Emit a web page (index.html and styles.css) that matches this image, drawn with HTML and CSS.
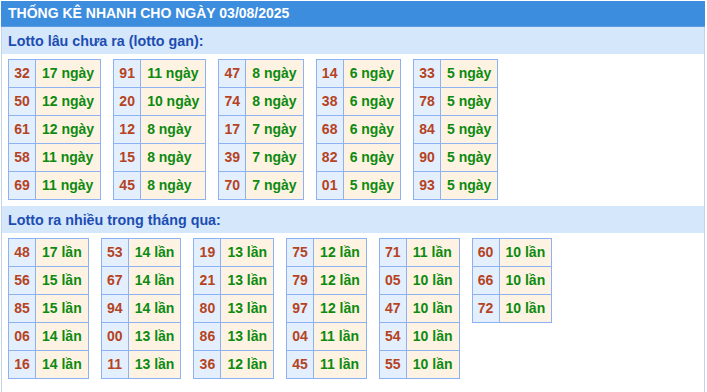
FILE: index.html
```html
<!DOCTYPE html>
<html lang="vi">
<head>
<meta charset="utf-8">
<title>Thống kê nhanh</title>
<link rel="stylesheet" href="styles.css">
</head>
<body>
<div class="box">
  <div class="title">THỐNG KÊ NHANH CHO NGÀY 03/08/2025</div>
  <div class="sub">Lotto lâu chưa ra (lotto gan):</div>
  <div class="group">
    <table class="t"><tr><td class="n">32</td><td class="v">17 ngày</td></tr><tr><td class="n">50</td><td class="v">12 ngày</td></tr><tr><td class="n">61</td><td class="v">12 ngày</td></tr><tr><td class="n">58</td><td class="v">11 ngày</td></tr><tr><td class="n">69</td><td class="v">11 ngày</td></tr></table>
    <table class="t"><tr><td class="n">91</td><td class="v">11 ngày</td></tr><tr><td class="n">20</td><td class="v">10 ngày</td></tr><tr><td class="n">12</td><td class="v">8 ngày</td></tr><tr><td class="n">15</td><td class="v">8 ngày</td></tr><tr><td class="n">45</td><td class="v">8 ngày</td></tr></table>
    <table class="t"><tr><td class="n">47</td><td class="v">8 ngày</td></tr><tr><td class="n">74</td><td class="v">8 ngày</td></tr><tr><td class="n">17</td><td class="v">7 ngày</td></tr><tr><td class="n">39</td><td class="v">7 ngày</td></tr><tr><td class="n">70</td><td class="v">7 ngày</td></tr></table>
    <table class="t"><tr><td class="n">14</td><td class="v">6 ngày</td></tr><tr><td class="n">38</td><td class="v">6 ngày</td></tr><tr><td class="n">68</td><td class="v">6 ngày</td></tr><tr><td class="n">82</td><td class="v">6 ngày</td></tr><tr><td class="n">01</td><td class="v">5 ngày</td></tr></table>
    <table class="t"><tr><td class="n">33</td><td class="v">5 ngày</td></tr><tr><td class="n">78</td><td class="v">5 ngày</td></tr><tr><td class="n">84</td><td class="v">5 ngày</td></tr><tr><td class="n">90</td><td class="v">5 ngày</td></tr><tr><td class="n">93</td><td class="v">5 ngày</td></tr></table>
  </div>
  <div class="sub">Lotto ra nhiều trong tháng qua:</div>
  <div class="group">
    <table class="t"><tr><td class="n">48</td><td class="v">17 lần</td></tr><tr><td class="n">56</td><td class="v">15 lần</td></tr><tr><td class="n">85</td><td class="v">15 lần</td></tr><tr><td class="n">06</td><td class="v">14 lần</td></tr><tr><td class="n">16</td><td class="v">14 lần</td></tr></table>
    <table class="t"><tr><td class="n">53</td><td class="v">14 lần</td></tr><tr><td class="n">67</td><td class="v">14 lần</td></tr><tr><td class="n">94</td><td class="v">14 lần</td></tr><tr><td class="n">00</td><td class="v">13 lần</td></tr><tr><td class="n">11</td><td class="v">13 lần</td></tr></table>
    <table class="t"><tr><td class="n">19</td><td class="v">13 lần</td></tr><tr><td class="n">21</td><td class="v">13 lần</td></tr><tr><td class="n">80</td><td class="v">13 lần</td></tr><tr><td class="n">86</td><td class="v">13 lần</td></tr><tr><td class="n">36</td><td class="v">12 lần</td></tr></table>
    <table class="t"><tr><td class="n">75</td><td class="v">12 lần</td></tr><tr><td class="n">79</td><td class="v">12 lần</td></tr><tr><td class="n">97</td><td class="v">12 lần</td></tr><tr><td class="n">04</td><td class="v">11 lần</td></tr><tr><td class="n">45</td><td class="v">11 lần</td></tr></table>
    <table class="t"><tr><td class="n">71</td><td class="v">11 lần</td></tr><tr><td class="n">05</td><td class="v">10 lần</td></tr><tr><td class="n">47</td><td class="v">10 lần</td></tr><tr><td class="n">54</td><td class="v">10 lần</td></tr><tr><td class="n">55</td><td class="v">10 lần</td></tr></table>
    <table class="t"><tr><td class="n">60</td><td class="v">10 lần</td></tr><tr><td class="n">66</td><td class="v">10 lần</td></tr><tr><td class="n">72</td><td class="v">10 lần</td></tr></table>
  </div>
</div>
</body>
</html>
```
FILE: styles.css
```css
html, body {
  margin: 0;
  padding: 0;
  background: #ffffff;
}
body {
  padding: 1px 0 0 1px;
  font-family: "Liberation Sans", Arial, sans-serif;
  font-weight: bold;
  font-size: 14px;
}
.box {
  width: 702px;
  min-height: 400px;
  border-left: 1px solid #c3d2e6;
  border-right: 1px solid #c3d2e6;
}
.title {
  margin: 0 -1px;
  height: 25px;
  line-height: 25px;
  padding-left: 7px;
  background: #3d8ddf;
  color: #ffffff;
  font-size: 14px;
  border-bottom: 1px solid #5a9de3;
}
.sub {
  height: 27px;
  line-height: 28px;
  padding-left: 6px;
  background: #d4e7fb;
  color: #1c4db2;
  font-size: 14.3px;
}
.group {
  display: flex;
  flex-wrap: wrap;
  align-items: flex-start;
  gap: 12px;
  padding: 5px 0 6px 6px;
}
.t {
  border-collapse: collapse;
}
.t td {
  border: 1px solid #8db2f1;
  height: 27px;
  padding: 0 6px;
  text-align: center;
  white-space: nowrap;
  line-height: 27px;
}
.t .n {
  background: #e3effd;
  color: #b5431f;
  padding: 0 5px;
  width: 16px;
}
.t .v {
  background: #fef3e3;
  color: #0d8a10;
  text-align: left;
}
```
